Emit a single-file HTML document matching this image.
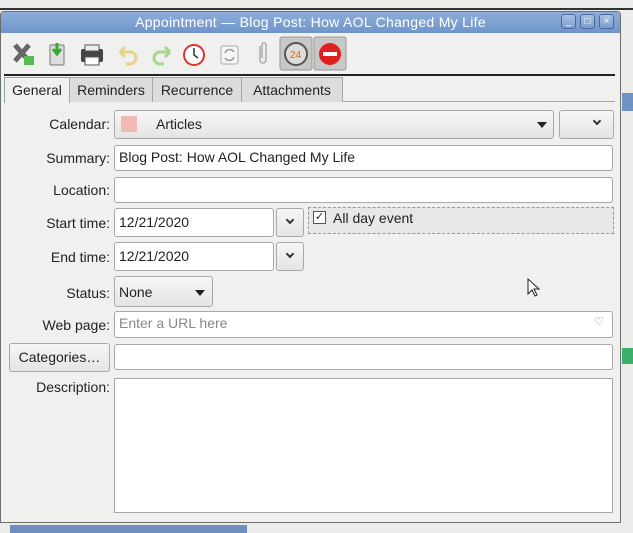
<!DOCTYPE html>
<html><head><style>
*{box-sizing:border-box;margin:0;padding:0}
body{width:633px;height:533px;overflow:hidden;background:#ececea;font-family:"Liberation Sans","DejaVu Sans",sans-serif;font-size:14px;color:#222;position:relative}
.a{position:absolute}
.win{left:0;top:11px;width:621px;height:512px;background:#f0f0ee;border:1px solid #6e6e6e;border-radius:4px 4px 0 0}
.title{left:1px;top:12px;width:619px;height:21px;background:linear-gradient(#8eaedb,#6f95c9);color:#fff;text-align:center;line-height:21px;font-size:14px;letter-spacing:0.3px;border-radius:3px 3px 0 0}
.wb{top:14px;width:15px;height:15px;border:1px solid #4a6898;border-radius:3px;background:linear-gradient(#a9c1e4,#7c9ccc);color:#fff;font-size:10px;text-align:center;line-height:13px}
.inp{background:#fff;border:1px solid #a8a8a6;border-radius:3px;padding-left:4px;line-height:23px}
.btn{background:linear-gradient(#f6f6f4,#e4e4e2);border:1px solid #a8a8a6;border-radius:3px}
.lbl{right:523px;text-align:right;white-space:nowrap}
.tab{top:77px;height:25px;border:1px solid #a8a8a6;border-bottom:none;background:#dcdcda;text-align:center;line-height:24px}
.chev{width:6px;height:6px;border-right:2px solid #333;border-bottom:2px solid #333;transform:rotate(45deg)}
.tri{width:0;height:0;border-left:5px solid transparent;border-right:5px solid transparent;border-top:6px solid #222}
</style></head><body>
<div class="a" style="left:0;top:8px;width:633px;height:2px;background:#333"></div>
<div class="a" style="left:622px;top:93px;width:11px;height:18px;background:#6f93c3"></div>
<div class="a" style="left:622px;top:348px;width:11px;height:16px;background:#3bb06a"></div>
<div class="a" style="left:10px;top:525px;width:237px;height:8px;background:#6f8fbe"></div>
<div class="a win"></div>
<div class="a title">Appointment — Blog Post: How AOL Changed My Life</div>
<div class="a wb" style="left:561px">_</div>
<div class="a wb" style="left:580px">□</div>
<div class="a wb" style="left:599px">×</div>
<svg class="a" style="left:8px;top:36px" width="340" height="36">
<g transform="translate(5,6)"><path d="M2 3l14 16M16 3L2 19" stroke="#666" stroke-width="5"/><rect x="11" y="14" width="10" height="9" fill="#5b5"/></g>
<g transform="translate(40,6)"><rect x="2" y="3" width="14" height="20" rx="1" fill="#ddd" stroke="#777"/><path d="M9 1v10M5 7l4 5 4-5" stroke="#3a3" stroke-width="3" fill="none"/></g>
<g transform="translate(72,8)"><rect x="1" y="5" width="22" height="13" rx="2" fill="#444"/><rect x="5" y="1" width="14" height="6" fill="#eee" stroke="#555"/><rect x="5" y="13" width="14" height="8" fill="#fff" stroke="#555"/></g>
<path d="M112 16h10a6 6 0 010 12h-4M112 16l5-5M112 16l5 5" stroke="#e5d48a" stroke-width="3" fill="none"/>
<path d="M162 16h-10a6 6 0 000 12h4M162 16l-5-5M162 16l-5 5" stroke="#a8d890" stroke-width="3" fill="none"/>
<circle cx="186" cy="19" r="10" fill="#fff" stroke="#d33" stroke-width="2"/><path d="M186 12v7l4 3" stroke="#333" stroke-width="1.5" fill="none"/>
<rect x="213" y="10" width="17" height="18" rx="2" fill="#f6f6f6" stroke="#aaa"/><path d="M217 17a5 5 0 019-1M226 21a5 5 0 01-9 1" stroke="#999" stroke-width="1.5" fill="none"/>
<path d="M252 10v14a3 3 0 006 0V9a2 2 0 00-4 0v13" stroke="#aaa" stroke-width="1.5" fill="none"/>
<rect x="272" y="1" width="32" height="33" rx="2" fill="#c8c8c6" stroke="#999"/>
<circle cx="288" cy="18" r="11" fill="#ddd" stroke="#555" stroke-width="2"/><text x="282" y="22" font-size="10" fill="#d60">24</text>
<rect x="306" y="1" width="32" height="33" rx="2" fill="#c8c8c6" stroke="#999"/>
<circle cx="322" cy="18" r="11" fill="#e02020"/><rect x="315" y="16" width="14" height="4" fill="#fff"/>
</svg>
<div class="a" style="left:4px;top:74px;width:611px;height:2px;background:#222"></div>
<div class="a" style="left:4px;top:101px;width:611px;height:1px;background:#a8a8a6"></div>
<div class="a tab" style="left:4px;width:66px;background:#f0f0ee;height:26px;border-color:#8aa">General</div>
<div class="a tab" style="left:69px;width:84px">Reminders</div>
<div class="a tab" style="left:152px;width:90px">Recurrence</div>
<div class="a tab" style="left:241px;width:102px">Attachments</div>

<div class="a lbl" style="top:116px">Calendar:</div>
<div class="a btn" style="left:114px;top:110px;width:440px;height:29px"></div>
<div class="a" style="left:121px;top:116px;width:16px;height:16px;background:#f0b8b8"></div>
<div class="a" style="left:156px;top:116px">Articles</div>
<div class="a tri" style="left:537px;top:122px"></div>
<div class="a btn" style="left:559px;top:110px;width:55px;height:29px"></div>
<div class="a chev" style="left:594px;top:118px"></div>

<div class="a lbl" style="top:150px">Summary:</div>
<div class="a inp" style="left:114px;top:145px;width:499px;height:26px">Blog Post: How AOL Changed My Life</div>
<div class="a lbl" style="top:182px">Location:</div>
<div class="a inp" style="left:114px;top:177px;width:499px;height:26px"></div>

<div class="a lbl" style="top:215px">Start time:</div>
<div class="a inp" style="left:114px;top:208px;width:160px;height:29px;line-height:27px">12/21/2020</div>
<div class="a btn" style="left:276px;top:208px;width:28px;height:29px"></div>
<div class="a chev" style="left:287px;top:217px"></div>
<div class="a" style="left:308px;top:207px;width:306px;height:27px;border:1px dashed #8a9ab8;background:#e8e8e6"></div>
<div class="a" style="left:313px;top:211px;width:13px;height:13px;border:1px solid #555;background:#fff;font-size:11px;line-height:11px;text-align:center">✓</div>
<div class="a" style="left:333px;top:210px">All day event</div>

<div class="a lbl" style="top:249px">End time:</div>
<div class="a inp" style="left:114px;top:242px;width:160px;height:29px;line-height:27px">12/21/2020</div>
<div class="a btn" style="left:276px;top:242px;width:28px;height:29px"></div>
<div class="a chev" style="left:287px;top:251px"></div>

<div class="a lbl" style="top:285px">Status:</div>
<div class="a btn" style="left:114px;top:276px;width:99px;height:31px"></div>
<div class="a" style="left:119px;top:284px">None</div>
<div class="a tri" style="left:195px;top:290px"></div>
<svg class="a" style="left:527px;top:278px" width="14" height="20"><path d="M1 1v15l4-4 3 6 2-1-3-6h5z" fill="#fff" stroke="#222"/></svg>

<div class="a lbl" style="top:317px">Web page:</div>
<div class="a inp" style="left:114px;top:311px;width:499px;height:27px;color:#888">Enter a URL here</div>
<div class="a" style="left:594px;top:315px;font-size:11px;color:#777">♡</div>

<div class="a btn" style="left:9px;top:343px;width:101px;height:29px;text-align:center;line-height:27px">Categories…</div>
<div class="a inp" style="left:114px;top:344px;width:499px;height:26px"></div>
<div class="a lbl" style="top:379px">Description:</div>
<div class="a inp" style="left:114px;top:378px;width:499px;height:135px;border-radius:0"></div>
</body></html>
